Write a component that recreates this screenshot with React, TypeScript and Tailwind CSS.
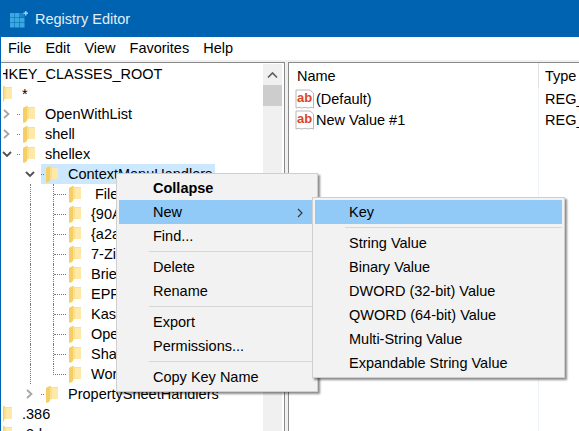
function Folder() {
  return (
    <svg width="12" height="18" viewBox="0 0 12 18" className="shrink-0">
      <path d="M0 3 L5 0.5 L5 2 L12 2 L12 14 L5 14 L2 17.5 L0 17.5 Z" fill="#fbe08c" />
      <path d="M6 3 H12 V14 H6 Z" fill="#fde9aa" />
      <path d="M0 3 L4 1 V16 L2 17.5 H0 Z" fill="#f5cf66" />
    </svg>
  );
}

function Chevron({ open }: { open?: boolean }) {
  return (
    <svg width="10" height="10" viewBox="0 0 10 10" className="shrink-0">
      {open ? (
        <path d="M1 3 L5 7 L9 3" fill="none" stroke="#505050" strokeWidth="1.8" />
      ) : (
        <path d="M2 1 L6.5 5 L2 9" fill="none" stroke="#a6a6a6" strokeWidth="1.8" />
      )}
    </svg>
  );
}

function AbIcon() {
  return (
    <svg width="20" height="20" viewBox="0 0 20 20" className="shrink-0">
      <path
        d="M1 1 H15 L18.5 4 V19 Q16 17.5 13.5 19 Q10 17.5 7 19 Q4 17.5 1 19 Z"
        fill="#fff"
        stroke="#b8b8b8"
        strokeWidth="1"
      />
      <text x="2" y="12.5" fontSize="13" fontWeight="700" fill="#d9472b" fontFamily="Liberation Sans">
        ab
      </text>
    </svg>
  );
}

type Row = { label: string; depth: number; chev?: "open" | "closed"; sel?: boolean; last?: boolean; wide?: boolean };

const rows: Row[] = [
  { label: "HKEY_CLASSES_ROOT", depth: -1 },
  { label: "*", depth: 0 },
  { label: "OpenWithList", depth: 1, chev: "closed" },
  { label: "shell", depth: 1, chev: "closed" },
  { label: "shellex", depth: 1, chev: "open" },
  { label: "ContextMenuHandlers", depth: 2, chev: "open", sel: true },
  { label: "File", depth: 3, wide: true },
  { label: "{90A", depth: 3 },
  { label: "{a2a", depth: 3 },
  { label: "7-Zi", depth: 3 },
  { label: "Brie", depth: 3 },
  { label: "EPP", depth: 3 },
  { label: "Kas", depth: 3 },
  { label: "Ope", depth: 3 },
  { label: "Sha", depth: 3 },
  { label: "Wor", depth: 3, last: true },
  { label: "PropertySheetHandlers", depth: 2, chev: "closed" },
  { label: ".386", depth: 0 },
  { label: ".3ds", depth: 0 },
];

function TreeRow({ r }: { r: Row }) {
  if (r.depth === -1) {
    return (
      <div className="h-5 flex items-center ml-[2px] overflow-hidden whitespace-nowrap">
        <span className="-ml-[5px] pt-[2px]">HKEY_CLASSES_ROOT</span>
      </div>
    );
  }
  if (r.depth === 0) {
    return (
      <div className="h-5 flex items-center ml-[2px]">
        <div className="w-[9px] overflow-hidden flex justify-end shrink-0">
          <Folder />
        </div>
        <span className="ml-[10px] pt-[2px] whitespace-nowrap">{r.label}</span>
      </div>
    );
  }
  if (r.depth === 1) {
    return (
      <div className="h-5 flex items-center pl-[1px]">
        <Chevron open={r.chev === "open"} />
        <div className="ml-[5px] w-[3px] border-t border-dotted border-[#777] shrink-0" />
        <div className="ml-[3px]">
          <Folder />
        </div>
        <span className="ml-[10px] pt-[2px] whitespace-nowrap">{r.label}</span>
      </div>
    );
  }
  if (r.depth === 2) {
    return (
      <div className="h-5 flex items-center pl-[24px]">
        <Chevron open={r.chev === "open"} />
        <div className={`ml-[6px] h-5 flex items-center shrink-0 ${r.sel ? "w-[174px] bg-[#cce8ff]" : ""}`}>
          <div className="w-[3px] border-t border-dotted border-[#777] shrink-0" />
          <div className="ml-[2px]">
            <Folder />
          </div>
          <span className="ml-[10px] pt-[2px] whitespace-nowrap">{r.label}</span>
        </div>
      </div>
    );
  }
  return (
    <div className="h-5 flex items-center">
      <div className="w-[30px] shrink-0 h-5 border-r border-dotted border-[#777]" />
      <div className="w-[22px] shrink-0" />
      <div className={`w-[13px] shrink-0 h-5 ${r.last ? "" : "border-l border-dotted border-[#777]"}`}>
        <div className={`h-[11px] border-b border-dotted border-[#777] ${r.last ? "border-l" : ""}`} />
      </div>
      <div className="ml-[3px]">
        <Folder />
      </div>
      <span className={`pt-[2px] whitespace-nowrap ${r.wide ? "ml-[14px]" : "ml-[10px]"}`}>{r.label}</span>
    </div>
  );
}

function Sep() {
  return <div className="h-px bg-[#d7d7d7] my-[3px] ml-[30px]" />;
}

function MenuItem({ label, bold, hi, arrow }: { label: string; bold?: boolean; hi?: boolean; arrow?: boolean }) {
  return (
    <div
      className={`h-[24px] pt-px flex items-center pl-[34px] pr-[12px] justify-between ${bold ? "font-bold" : ""} ${hi ? "bg-[#91c9f7]" : ""}`}
    >
      <span>{label}</span>
      {arrow && (
        <svg width="6" height="10" viewBox="0 0 6 10">
          <path d="M1 1 L5 5 L1 9" fill="none" stroke="#333" strokeWidth="1.1" />
        </svg>
      )}
    </div>
  );
}

const MENU =
  "absolute bg-[#f2f2f2] border border-[#cfcfcf] shadow-[2px_2px_2px_rgba(0,0,0,0.45)] p-[2px]";

export default function App() {
  return (
    <div className="relative w-[579px] h-[431px] overflow-hidden bg-white text-[14.5px] text-black font-['Liberation_Sans',sans-serif]">
      <div className="h-[37px] bg-[#0063b1] flex items-center pl-[10px] gap-[7px]">
        <svg width="18" height="18" viewBox="0 0 18 18">
          <g fill="#3aa9e2">
            <rect x="0" y="3" width="4.5" height="4.5" />
            <rect x="5" y="3" width="4.5" height="4.5" />
            <rect x="0" y="8" width="4.5" height="4.5" />
            <rect x="5" y="8" width="4.5" height="4.5" />
            <rect x="10" y="8" width="4.5" height="4.5" />
            <rect x="0" y="13" width="4.5" height="4.5" />
            <rect x="5" y="13" width="4.5" height="4.5" />
            <rect x="10" y="13" width="4.5" height="4.5" />
            <rect x="10" y="3" width="4.5" height="4.5" fill="#1f85c8" />
            <path d="M15 1 H16.5 V2.5 H18 V4 H16.5 V5.5 H15 V4 H13.5 V2.5 H15 Z" fill="#8fd3f2" />
          </g>
        </svg>
        <span className="text-[14.5px] pt-[2px] text-[#e3eef8]">Registry Editor</span>
      </div>
      <div className="border-l border-[#0063b1] h-[394px] flex flex-col">
        <div className="h-[23px] flex items-center pl-[7px] gap-[14px] bg-white shrink-0">
          <span>File</span>
          <span>Edit</span>
          <span>View</span>
          <span>Favorites</span>
          <span>Help</span>
        </div>
        <div className="h-[2px] bg-[#f0f0f0] shrink-0" />
        <div className="flex flex-1 min-h-0">
          <div className="w-[284px] shrink-0 flex border-t border-r border-[#8a8a8a] overflow-hidden">
            <div className="w-[262px] overflow-hidden pt-px shrink-0">
              {rows.map((r) => (
                <TreeRow key={r.label} r={r} />
              ))}
            </div>
            <div className="w-[19px] shrink-0 mt-px bg-[#f0f0f0] flex flex-col">
              <div className="h-[21px] flex items-center justify-center">
                <svg width="11" height="8" viewBox="0 0 11 8">
                  <path d="M1 6.5 L5.5 2 L10 6.5" fill="none" stroke="#606060" strokeWidth="1.7" />
                </svg>
              </div>
              <div className="h-[21px] bg-[#cdcdcd]" />
            </div>
          </div>
          <div className="w-[3px] shrink-0 bg-[#f0f0f0]" />
          <div className="flex-1 min-w-0 flex border-t border-l border-[#8a8a8a] overflow-hidden">
            <div className="w-[250px] shrink-0 flex flex-col">
              <div className="h-[25px] shrink-0 pl-2 pt-[3px] flex items-center border-r border-[#e0e0e0]">Name</div>
              {["(Default)", "New Value #1"].map((n) => (
                <div key={n} className="h-[21px] shrink-0 pl-[6px] flex items-center gap-px border-r border-[#edf3f8]">
                  <AbIcon />
                  <span className="pt-[2px]">{n}</span>
                </div>
              ))}
              <div className="flex-1 border-r border-[#edf3f8]" />
            </div>
            <div className="flex-1 min-w-0 flex flex-col pl-[6px] whitespace-nowrap">
              <div className="h-[25px] shrink-0 pt-[3px] flex items-center">Type</div>
              <div className="h-[21px] shrink-0 pt-[2px] flex items-center">REG_SZ</div>
              <div className="h-[21px] shrink-0 pt-[2px] flex items-center">REG_SZ</div>
            </div>
          </div>
        </div>
      </div>

      <div className={`${MENU} left-[116px] top-[173px] w-[202px]`}>
        <MenuItem label="Collapse" bold />
        <MenuItem label="New" hi arrow />
        <MenuItem label="Find..." />
        <Sep />
        <MenuItem label="Delete" />
        <MenuItem label="Rename" />
        <Sep />
        <MenuItem label="Export" />
        <MenuItem label="Permissions..." />
        <Sep />
        <MenuItem label="Copy Key Name" />
      </div>
      <div className={`${MENU} left-[312px] top-[197px] w-[253px]`}>
        <MenuItem label="Key" hi />
        <Sep />
        <MenuItem label="String Value" />
        <MenuItem label="Binary Value" />
        <MenuItem label="DWORD (32-bit) Value" />
        <MenuItem label="QWORD (64-bit) Value" />
        <MenuItem label="Multi-String Value" />
        <MenuItem label="Expandable String Value" />
      </div>
    </div>
  );
}
